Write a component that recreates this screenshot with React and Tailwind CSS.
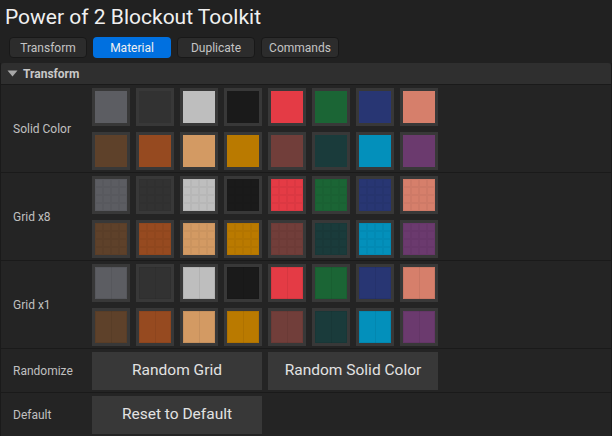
import React from "react";

const row1 = ["#5c5d62", "#323232", "#bebebe", "#1a1a1a", "#e43b45", "#1b6535", "#283673", "#d67f6b"];
const row2 = ["#5e412a", "#964a20", "#d39a63", "#ba7a00", "#713e3a", "#1a3b3b", "#0390bb", "#6b3a6e"];

function Swatch({ color, kind }) {
  return (
    <div className="w-[38px] h-[38px] bg-[#383838] p-[3px]">
      <div className="relative w-full h-full overflow-hidden" style={{ backgroundColor: color }}>
        {kind === "x8" && (
          <div className="absolute inset-0 grid grid-cols-4 grid-rows-4">
            {Array.from({ length: 16 }).map((_, i) => (
              <div key={i} className="border-[0.5px] border-[rgba(0,0,0,0.035)]" />
            ))}
          </div>
        )}
        {kind === "x1" && (
          <>
            <div className="absolute inset-0 border border-[rgba(0,0,0,0.06)]" />
            <div className="absolute top-0 bottom-0 left-1/2 w-px bg-[rgba(0,0,0,0.06)]" />
          </>
        )}
      </div>
    </div>
  );
}

function SwatchRow({ label, kind }) {
  return (
    <div className="flex border-t border-[#1a1a1a] h-[88px]">
      <div className="w-[91px] flex items-center pl-[12px] text-[12px] text-[#c0c0c0]">{label}</div>
      <div className="flex flex-col gap-[6px] pt-[3px]">
        <div className="flex gap-[6px]">
          {row1.map((c, i) => (
            <Swatch key={i} color={c} kind={kind} />
          ))}
        </div>
        <div className="flex gap-[6px]">
          {row2.map((c, i) => (
            <Swatch key={i} color={c} kind={kind} />
          ))}
        </div>
      </div>
    </div>
  );
}

function Btn({ children }) {
  return (
    <div className="w-[170px] h-[38px] bg-[#383838] flex items-center justify-center text-[15.5px] text-[#e2e2e2]">
      {children}
    </div>
  );
}

export default function App() {
  const tabs = ["Transform", "Material", "Duplicate", "Commands"];
  return (
    <div
      className="w-[612px] h-[436px] bg-[#212121] overflow-hidden flex flex-col"
      style={{ fontFamily: "Roboto, 'Noto Sans', sans-serif" }}
    >
      <div className="h-[37px] pl-[5px] pt-[2px] text-[21px] leading-[30px] text-[#f0f0f0]">
        Power of 2 Blockout Toolkit
      </div>
      <div className="flex gap-[6px] pl-[9px] h-[21px]">
        {tabs.map((t) => (
          <div
            key={t}
            className={
              t === "Material"
                ? "w-[78px] h-[21px] rounded-[4px] bg-[#0070e0] flex items-center justify-center text-[12px] text-[#f0f0f0]"
                : "w-[78px] h-[21px] rounded-[4px] bg-[#2c2c2c] border border-[#181818] flex items-center justify-center text-[12px] text-[#c4c4c4]"
            }
          >
            {t}
          </div>
        ))}
      </div>
      <div className="mt-[5px] flex-1 flex flex-col border-x border-[#1a1a1a] bg-[#242424]">
        <div className="h-[21px] bg-[#2f2f2f] rounded-t-[3px] flex items-center pl-[6px] gap-[5px]">
          <svg width="11" height="7" viewBox="0 0 11 7">
            <path d="M0.5 0.5 L10.5 0.5 L5.5 6.5 Z" fill="#a8a8a8" />
          </svg>
          <span className="text-[12px] font-bold text-[#c8c8c8]">Transform</span>
        </div>
        <SwatchRow label="Solid Color" kind="solid" />
        <SwatchRow label="Grid x8" kind="x8" />
        <SwatchRow label="Grid x1" kind="x1" />
        <div className="flex border-t border-[#1a1a1a] h-[44px]">
          <div className="w-[91px] flex items-center pl-[12px] text-[12px] text-[#c0c0c0]">Randomize</div>
          <div className="flex gap-[6px] pt-[3px]">
            <Btn>Random Grid</Btn>
            <Btn>Random Solid Color</Btn>
          </div>
        </div>
        <div className="flex border-t border-[#1a1a1a] h-[44px]">
          <div className="w-[91px] flex items-center pl-[12px] text-[12px] text-[#c0c0c0]">Default</div>
          <div className="flex gap-[6px] pt-[3px]">
            <Btn>Reset to Default</Btn>
          </div>
        </div>
      </div>
    </div>
  );
}
